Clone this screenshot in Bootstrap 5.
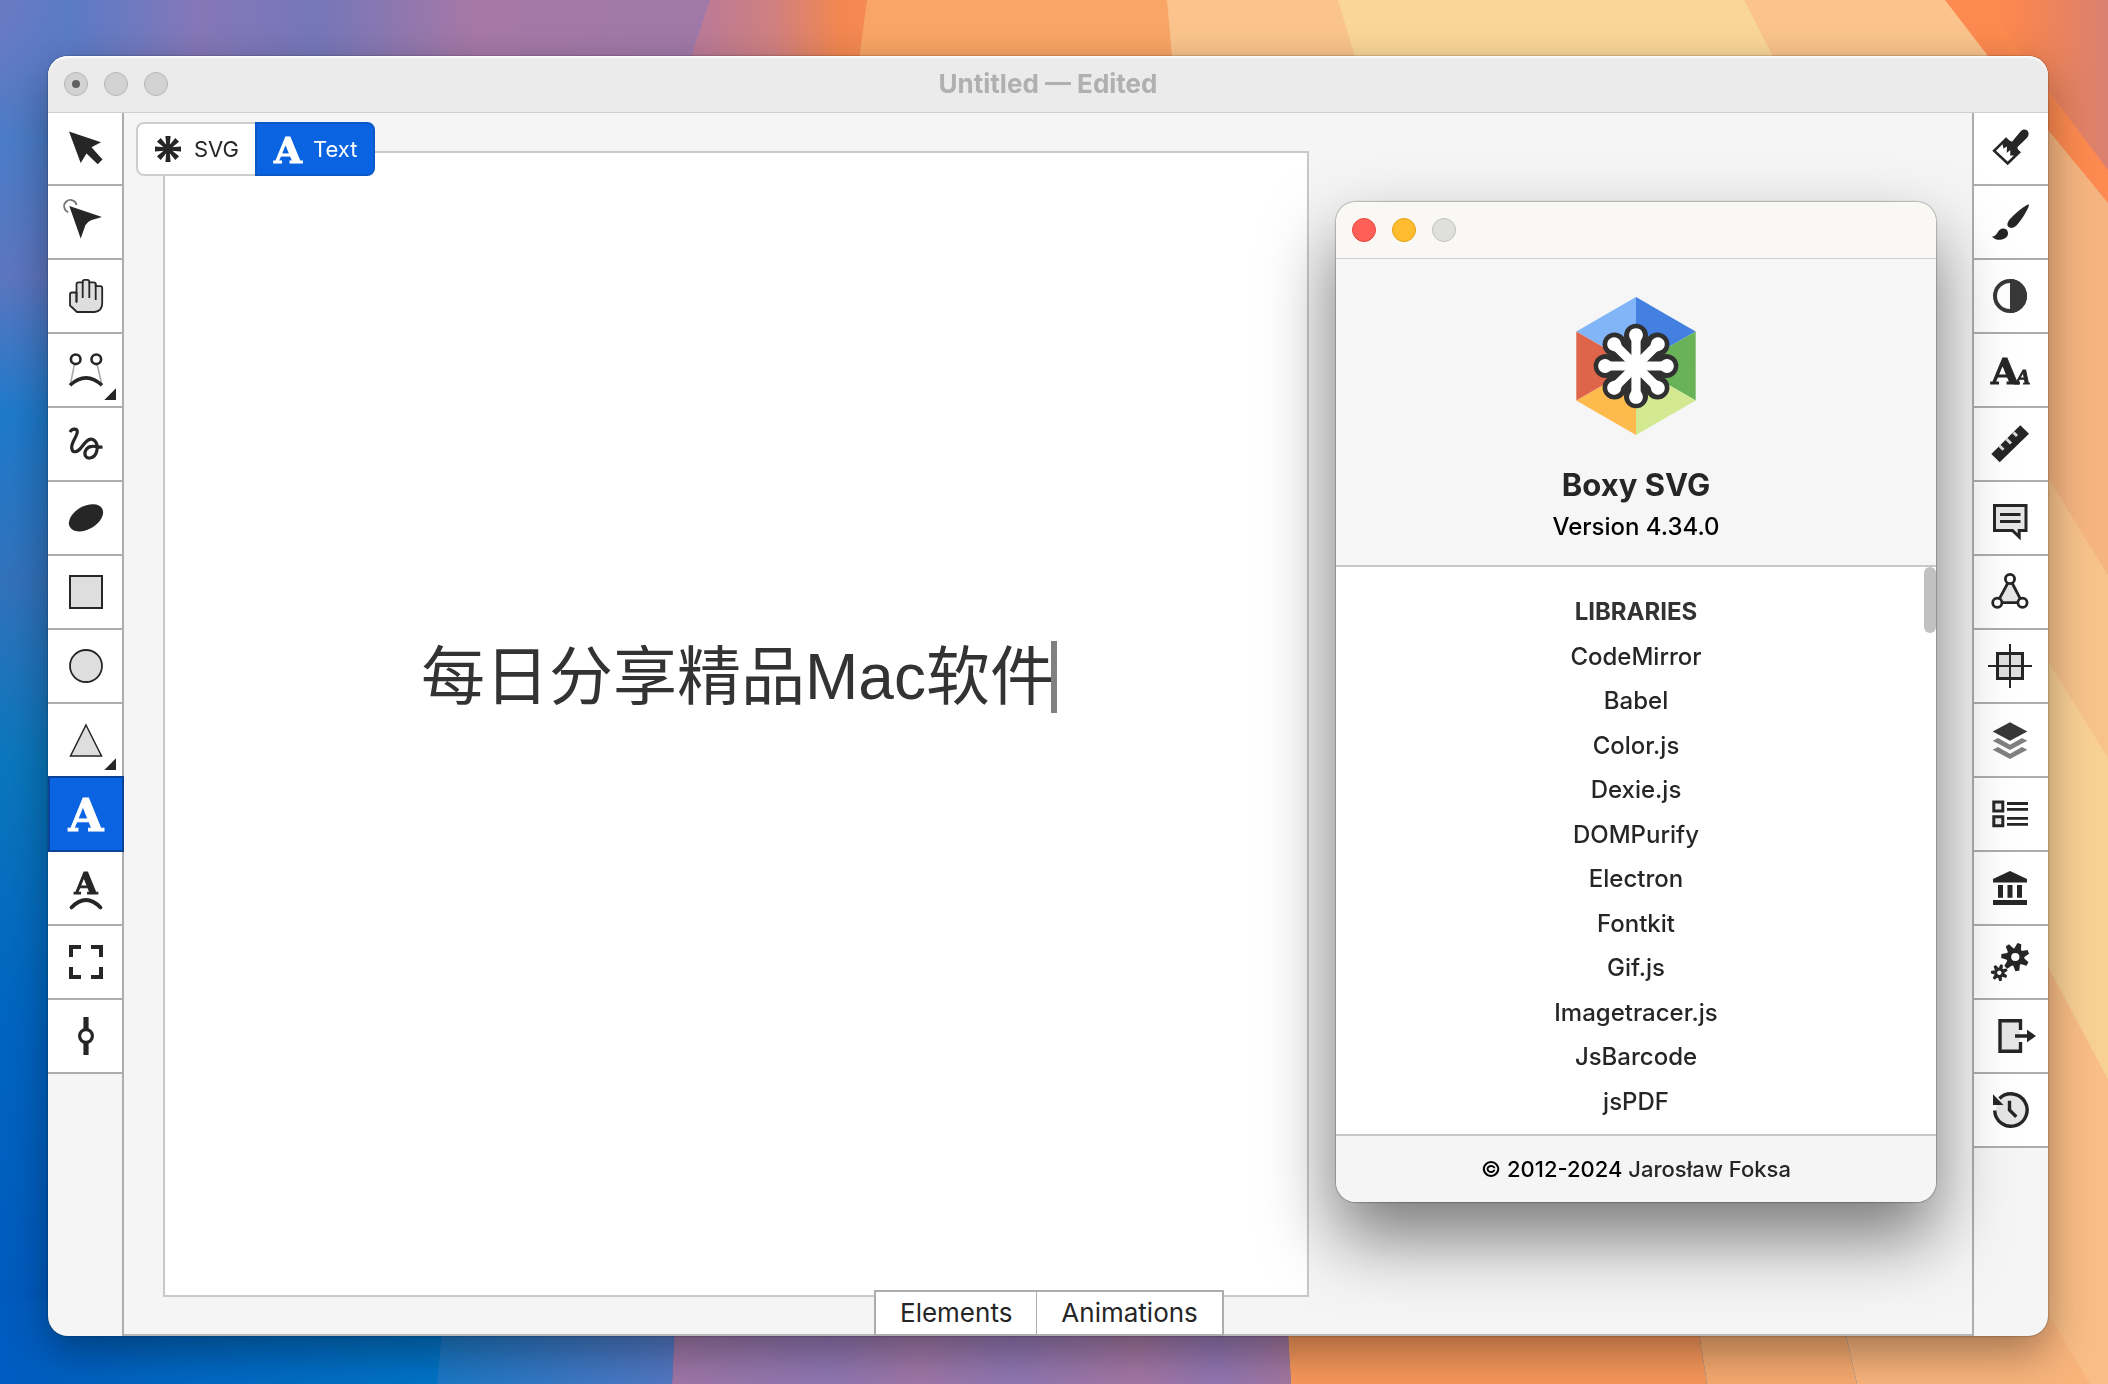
<!DOCTYPE html>
<html lang="en">
<head>
<meta charset="utf-8">
<meta name="viewport" content="width=device-width, initial-scale=1">
<title>Untitled — Edited</title>
<link href="https://cdn.jsdelivr.net/npm/bootstrap@5.3.0/dist/css/bootstrap.min.css" rel="stylesheet">
<style>
  :root { --ink: #262626; --line: #adadad; --accent: #0a64e2; }
  body { font-family: Inter, "Noto Sans CJK SC", sans-serif; color: var(--ink); background: #0067c2; padding: 56px 60px 48px 48px; }
  .wallpaper { z-index: -1; }
  .app-window { border-radius: 20px; background: #f5f5f5; box-shadow: 0 0 2px rgba(0,0,0,.5), 0 16px 44px rgba(0,0,0,.36); }
  .app-title { height: 56px; background: #ebebeb; border-radius: 20px 20px 0 0; padding: 0 16px; box-shadow: inset 0 2px 1px #fafafa, 0 1px 0 #cfcfcf; z-index: 1; }
  .app-title h1 { font-size: 26px; line-height: 32px; color: #b0b0b0; }
  .light { width: 24px; height: 24px; border-radius: 50%; border: 1px solid #b5b5b5; background: #d2d2d2; padding: 0; }
  .light-row { gap: 16px; }
  .dot { width: 8px; height: 8px; border-radius: 50%; background: #606060; }
  .light-red { background: #ff5f57; border-color: #e2463f; }
  .light-amber { background: #febc2e; border-color: #e1a116; }
  .light-off { background: #dfdfdb; border-color: #c2c2be; }

  .app-body { flex: 1 1 0; min-height: 0; }
  .tools { width: 76px; }
  .tools-left { border-right: 2px solid var(--line); border-radius: 0 0 0 20px; }
  .tools-right { border-left: 2px solid var(--line); }
  .tool { height: 74px; border: 0; border-bottom: 2px solid var(--line); background: #fff; padding: 0; color: var(--ink); }
  .tool svg { width: 74px; height: 72px; display: block; }
  .tool.active { background: var(--accent); color: #fff; width: 76px; height: 76px; margin-top: -2px; border: 2px solid #0a4396; z-index: 1; position: relative; }
  .tool.active svg { margin-left: -2px; }
  .slab { font-family: "DejaVu Serif", serif; font-weight: 700; fill: currentColor; stroke: currentColor; stroke-width: 1; text-anchor: middle; }
  .slab-alt { font-family: "Liberation Serif", serif; font-style: italic; }
  .tool svg, .crumb svg { fill: none; stroke: none; overflow: visible; }
  .f { fill: var(--ink); }
  .s { stroke: var(--ink); }
  .pale { fill: #dedede; }

  .canvas { padding: 39px 39px 37px; border-bottom: 2px solid #b9b9b9; }
  .artboard { aspect-ratio: 1; background: #fff; border: 2px solid #c8c8c8; }
  .art-text { font-family: "Liberation Sans", "Noto Sans CJK SC", sans-serif; font-size: 64px; line-height: 72px; color: #333; padding-left: 256px; padding-bottom: 94px; white-space: nowrap; }
  .caret { width: 6px; height: 72px; background: #808080; margin-left: -3px; }

  .crumbs { top: 10px; left: 12px; border: 2px solid #cdcdcd; border-radius: 8px; background: #fff; }
  .crumb { height: 50px; border: 0; background: none; font-size: 22px; line-height: 28px; color: var(--ink); padding: 0 18px 0 16px; gap: 12px; white-space: nowrap; }
  .crumb.active { background: var(--accent); color: #fff; margin: -2px; height: 54px; border: 2px solid #0a58c8; border-radius: 0 8px 8px 0; padding: 0 16px 0 14px; gap: 8px; }
  .panel-tabs { bottom: -2px; left: 750px; border: 2px solid var(--line); background: #fff; }
  .panel-tab { height: 42px; border: 0; background: none; font-size: 26px; line-height: 32px; color: var(--ink); padding: 0 24px; }
  .panel-tab + .panel-tab { border-left: 1px solid var(--line); }

  .about { top: 146px; right: 112px; width: 600px; height: 1000px; border-radius: 20px; background: #fff; box-shadow: 0 0 2px rgba(0,0,0,.75), 0 36px 70px rgba(0,0,0,.5); z-index: 3; overflow: hidden; }
  .about-bar { height: 57px; background: #faf8f4; border-bottom: 1px solid #cfcfcf; padding: 0 16px; }
  .about-head { background: #f6f6f6; border-bottom: 2px solid #c8c8c8; padding: 38px 0 22px; }
  .about-head h2 { font-size: 31px; line-height: 36px; margin: 32px 0 8px; font-weight: 700; }
  .version { font-size: 24px; line-height: 32px; font-weight: 500; color: #000; }
  .libs { padding: 23px 0 10px; font-size: 24px; line-height: 32px; font-weight: 500; }
  .libs h3 { font-size: 24px; line-height: 32px; font-weight: 700; color: #333; margin: 0; }
  .libs a, .about-foot a { color: var(--ink); text-decoration: none; }
  .about-foot { height: 68px; background: #f5f5f5; border-top: 2px solid #c8c8c8; font-size: 22px; line-height: 32px; font-weight: 500; color: #000; }
  .thumb { top: 0; right: 0; width: 12px; height: 66px; border-radius: 6px; background: #c1c1c1; }
</style>
<script src="https://cdn.jsdelivr.net/npm/bootstrap@5.3.0/dist/js/bootstrap.bundle.min.js"></script>
</head>
<body class="vh-100 overflow-hidden">

<svg class="wallpaper position-fixed top-0 start-0 w-100 h-100" viewBox="0 0 2108 1384" preserveAspectRatio="none" aria-hidden="true">
  <defs>
    <linearGradient id="gTop" gradientUnits="userSpaceOnUse" x1="0" x2="706" y1="0" y2="0">
      <stop offset="0" stop-color="#6b7ac2"/><stop offset=".1" stop-color="#5a7bc6"/><stop offset=".28" stop-color="#8577b8"/><stop offset=".45" stop-color="#7577b9"/><stop offset=".67" stop-color="#a678a6"/><stop offset="1" stop-color="#a079a8"/>
    </linearGradient>
    <linearGradient id="gRose"><stop offset="0" stop-color="#b5799c"/><stop offset=".5" stop-color="#d08080"/><stop offset=".85" stop-color="#f28750"/><stop offset="1" stop-color="#f58a54"/></linearGradient>
    <linearGradient id="gSide" x1="0" y1="0" x2="0" y2="1">
      <stop offset="0" stop-color="#5a7bc6" stop-opacity="0"/><stop offset=".1" stop-color="#4b7cc8"/><stop offset=".2" stop-color="#5d76c0"/><stop offset=".3" stop-color="#1e7acb"/><stop offset=".42" stop-color="#3372bc"/><stop offset=".55" stop-color="#0a77bd"/><stop offset=".75" stop-color="#0064c2"/><stop offset="1" stop-color="#0058bd"/>
    </linearGradient>
    <linearGradient id="gBlue"><stop offset="0" stop-color="#005bc0"/><stop offset=".4" stop-color="#0068c4"/><stop offset="1" stop-color="#0074c8"/></linearGradient>
    <linearGradient id="gTeal"><stop offset="0" stop-color="#1a78c6"/><stop offset="1" stop-color="#5578c4"/></linearGradient>
    <linearGradient id="gPurple"><stop offset="0" stop-color="#a077a8"/><stop offset=".25" stop-color="#9077b3"/><stop offset=".4" stop-color="#a077a8"/><stop offset=".55" stop-color="#9077b3"/><stop offset=".75" stop-color="#a577a4"/><stop offset=".88" stop-color="#9276b2"/><stop offset="1" stop-color="#a577a0"/></linearGradient>
    <linearGradient id="gCorner"><stop offset="0" stop-color="#fd8b50"/><stop offset=".3" stop-color="#f88650"/><stop offset="1" stop-color="#d98070"/></linearGradient>
  </defs>
  <path fill="url(#gTop)" d="M0 0H712L600 700H0Z"/>
  <path fill="url(#gSide)" d="M0 0H60V1384H0Z"/>
  <path fill="#fac48c" d="M900 0H2108V100H900Z"/>
  <path fill="url(#gRose)" d="M710 0H868L860 56V90H680Z"/>
  <path fill="#f9a565" d="M867 0H1167L1175 90H855Z"/>
  <path fill="#fad698" d="M1338 0H1744L1790 90H1365Z"/>
  <path fill="#f6b580" d="M2030 60H2108V1384H2030Z"/>
  <path fill="#f8c38b" d="M2040 465L2108 575V760L2040 648Z"/>
  <path fill="#f9d094" d="M2040 648L2108 758V1080L2040 952Z"/>
  <path fill="#f9bd86" d="M2040 952L2108 1080V1384H2040Z"/>
  <path fill="#fd8a50" d="M1945 0H2108V203L2040 120L1988 56Z"/>
  <path fill="url(#gCorner)" d="M1985 0H2108V170L2040 80Z"/>
  <path fill="url(#gBlue)" d="M0 1300H445L437 1384H0Z"/>
  <path fill="url(#gTeal)" d="M445 1300H676L672 1384H437Z"/>
  <path fill="url(#gPurple)" d="M676 1300H1286L1291 1384H672Z"/>
  <path fill="#f8985c" d="M1286 1300H1694L1707 1384H1291Z"/>
  <path fill="#f7ab70" d="M1694 1300H1838L1857 1384H1707Z"/>
  <path fill="#f9b47c" d="M1838 1300H2040L2090 1384H1857Z"/>
</svg>

<main class="app-window position-relative d-flex flex-column h-100">
  <header class="app-title position-relative d-flex align-items-center justify-content-center flex-shrink-0">
    <div class="light-row d-flex position-absolute start-0 ms-3">
      <button class="light d-flex align-items-center justify-content-center" aria-label="Close"><span class="dot"></span></button>
      <button class="light" aria-label="Minimize"></button>
      <button class="light" aria-label="Zoom"></button>
    </div>
    <h1 class="m-0 fw-bold">Untitled — Edited</h1>
  </header>

  <div class="app-body d-flex">
    <nav class="tools tools-left d-flex flex-column flex-shrink-0" aria-label="Tools">
      <button class="tool" aria-label="Transform"><svg viewBox="0 0 74 72"><path class="f" d="M21 19.5L53 30.3 43.5 35.3 54.5 47.5 49.7 52.3 38.5 41.5 32.7 51Z"/></svg></button>
      <button class="tool" aria-label="Edit"><svg viewBox="0 0 74 72"><path d="M20.3 26.2A6.3 6.3 0 1 1 28.6 19" stroke="#777" stroke-width="1.8"/><path class="f" d="M21.3 20L54 31 43 34.2Q39 36 37.5 39L32.7 52.5Z"/></svg></button>
      <button class="tool" aria-label="Pan"><svg viewBox="0 0 74 72"><path class="pale s" stroke-width="1.8" stroke-linejoin="round" d="M28.5 42V32.5H24Q22 32.5 22 34.5V45.5L29 52H46.5Q54.2 51 54.2 43.5V28Q54.2 26.2 52.2 26.2H47.7V24Q47.7 22.3 45.7 22.3H41.3V21.5Q41.3 19.8 39.3 19.8H36.7Q34.7 19.8 34.7 21.5V22.3H30.5Q28.5 22.3 28.5 24.3Z"/><path class="s" stroke-width="1.8" d="M28.5 32V42M34.7 22V38M41.3 22V38M47.7 24V40"/></svg></button>
      <button class="tool" aria-label="Cubic Bézier"><svg viewBox="0 0 74 72"><path stroke="#aaa" stroke-width="1.6" d="M26.3 31L22.3 51M49.3 31L53.7 50"/><circle class="s" cx="27.7" cy="25.3" r="4.8" stroke-width="2.6"/><circle class="s" cx="48.3" cy="25.3" r="4.8" stroke-width="2.6"/><path class="s" stroke-width="3.6" d="M22 51.3Q38 36.5 54 51.3"/><path class="f" d="M68 54.3V66H56.3Z"/></svg></button>
      <button class="tool" aria-label="Freehand"><svg viewBox="0 0 74 72"><path class="s" stroke-width="3.2" d="M22 24C24 20.5 29 20 29.3 23.5C29.6 28 23.2 34 23.7 40C24.2 45 28.5 44.5 31.5 41.5C35 38 39 30 44 31.2C48.5 32.5 50.5 38 48.5 44C46.5 50.5 39.5 51.5 37.5 48C35.5 43.5 39 38.5 44 38.3C48 38 50 39.5 54.5 39"/></svg></button>
      <button class="tool" aria-label="Blob"><svg viewBox="0 0 74 72"><ellipse class="f" cx="38" cy="35.8" rx="18.6" ry="11.5" transform="rotate(-30 38 35.8)"/></svg></button>
      <button class="tool" aria-label="Rectangle"><svg viewBox="0 0 74 72"><path class="pale s" stroke-width="2" d="M22 20H54V52H22Z"/></svg></button>
      <button class="tool" aria-label="Ellipse"><svg viewBox="0 0 74 72"><circle class="pale s" stroke-width="1.8" cx="38" cy="36" r="16"/></svg></button>
      <button class="tool" aria-label="Triangle"><svg viewBox="0 0 74 72"><path class="pale s" stroke-width="1.5" d="M38 21L53.5 52H22.5Z"/><path class="f" d="M68 54.3V66H56.3Z"/></svg></button>
      <button class="tool active" aria-label="Text"><svg viewBox="0 0 74 72"><text class="slab" x="38" y="53" font-size="45">A</text></svg></button>
      <button class="tool" aria-label="Text on path"><svg viewBox="0 0 74 72"><text class="slab" x="38" y="42" font-size="30">A</text><path class="s" stroke-width="3.8" stroke-linecap="round" d="M23.5 55.5Q38 40.5 52.5 55.5"/></svg></button>
      <button class="tool" aria-label="View"><svg viewBox="0 0 74 72"><path class="s" stroke-width="4" d="M33 21H23V31M43 21H53V31M33 51H23V41M43 51H53V41"/></svg></button>
      <button class="tool" aria-label="Gradient"><svg viewBox="0 0 74 72"><path class="s" stroke-width="5.2" d="M38 17V29M38 43V55"/><circle class="s" cx="38" cy="36" r="6.4" stroke-width="3.2"/></svg></button>
    </nav>

    <section class="canvas position-relative flex-grow-1 d-flex justify-content-start">
      <div class="artboard d-flex align-items-center">
        <div class="art-text d-flex"><span>每日分享精品Mac软件</span><span class="caret"></span></div>
      </div>
      <div class="crumbs d-flex position-absolute">
        <button class="crumb d-flex align-items-center"><svg width="28" height="28" viewBox="-14 -14 28 28"><g class="f"><path id="ray" d="M-2.6 -13H2.6L1.4 0H-1.4Z"/><use href="#ray" transform="rotate(45)"/><use href="#ray" transform="rotate(90)"/><use href="#ray" transform="rotate(135)"/><use href="#ray" transform="rotate(180)"/><use href="#ray" transform="rotate(225)"/><use href="#ray" transform="rotate(270)"/><use href="#ray" transform="rotate(315)"/><circle r="5"/></g></svg>SVG</button>
        <button class="crumb active d-flex align-items-center"><svg width="34" height="30" viewBox="0 0 34 30"><text class="slab" x="17" y="29" font-size="36">A</text></svg>Text</button>
      </div>
      <div class="panel-tabs d-flex position-absolute">
        <button class="panel-tab">Elements</button>
        <button class="panel-tab">Animations</button>
      </div>
    </section>

    <nav class="tools tools-right d-flex flex-column flex-shrink-0" aria-label="Panels">
      <button class="tool" aria-label="Fill"><svg viewBox="0 0 74 72"><path class="f" d="M18.3 38.7L32 25.3 35.5 28.5 38 29.8 46.5 19.5C52 14 58 21.5 52.3 26.5L43.3 35.3 44 37.5 47 40.3 33.7 53.3Z"/><path fill="#fff" d="M22 38.7L28.5 32.3 29.5 36.5 33 34.5 32.7 41 36.3 38 36.2 43.5 39.8 43.5 33.7 49.6Z"/></svg></button>
      <button class="tool" aria-label="Stroke"><svg viewBox="0 0 74 72"><path class="f" d="M54.3 18.3Q55.5 19 54.5 21C51.5 27.5 46.5 35.5 42.5 39.5C39.5 42.5 36 42.5 34.3 40.8C32.6 39 33.5 36 36 33C40.5 28 47 22.5 54.3 18.3Z"/><path class="f" d="M18 50.5C24 50.5 23 42.5 29.5 42.5C33 42.5 34.8 46 33.8 49C32.3 53.5 22.5 56.5 18 50.5Z"/></svg></button>
      <button class="tool" aria-label="Compositing"><svg viewBox="0 0 74 72"><circle cx="36" cy="36" r="15" stroke="#383838" stroke-width="4"/><path fill="#383838" d="M36 19A17 17 0 0 1 36 53Z"/></svg></button>
      <button class="tool" aria-label="Typography"><svg viewBox="0 0 74 72"><text class="slab" x="31" y="50" font-size="36">A</text><text class="slab slab-alt" x="49" y="50" font-size="22">A</text></svg></button>
      <button class="tool" aria-label="Geometry"><svg viewBox="0 0 74 72"><path class="f" d="M17.3 46L46.3 17.3 55 25.7 25.7 54.3Z"/><path stroke="#ddd" stroke-width="3" d="M25.5 37.8L29.5 41.8M32.5 31L37 35.5M39.5 24.5L43 28"/></svg></button>
      <button class="tool" aria-label="Meta"><svg viewBox="0 0 74 72"><path class="s" fill="#e6e6e6" stroke-width="3" d="M20.5 23.5H52V48.5H45.2V55L38.5 48.5H20.5Z"/><path class="s" stroke-width="3" d="M26 32.5H46.5M26 39.5H46.5"/></svg></button>
      <button class="tool" aria-label="Shape"><svg viewBox="0 0 74 72"><path class="s" fill="#e6e6e6" stroke-width="2.8" d="M36 23L48.3 46.7H23.3Z"/><g class="s" fill="#fff" stroke-width="2.8"><circle cx="36" cy="23" r="4.6"/><circle cx="23.3" cy="46.7" r="4.6"/><circle cx="48.5" cy="46.7" r="4.6"/></g></svg></button>
      <button class="tool" aria-label="Arrangement"><svg viewBox="0 0 74 72"><path class="pale s" stroke-width="3" d="M23.5 23.5H48.5V48.5H23.5Z"/><path class="s" stroke-width="2" d="M14 36H58M36 14V58"/></svg></button>
      <button class="tool" aria-label="Objects"><svg viewBox="0 0 74 72"><path fill="#383838" d="M18.7 27.5L36 18.3 53.3 27.5 36 36.7Z"/><path id="chev" fill="#808080" d="M18.7 36.7L24 34 36 40.7 48 34 53.3 36.7 36 46Z"/><use href="#chev" y="9"/></svg></button>
      <button class="tool" aria-label="Defs"><svg viewBox="0 0 74 72"><path class="s" fill="#eee" stroke-width="3" d="M19.8 24H28.8V33H19.8ZM19.8 38.7H28.8V47.7H19.8Z"/><path class="s" stroke-width="2.8" d="M33 25.5H54M33 31.3H54M33 40.3H54M33 46.3H54"/></svg></button>
      <button class="tool" aria-label="Library"><svg viewBox="0 0 74 72"><path class="f" d="M36 19L53 27V30.5H19V27ZM24 33H29V45.7H24ZM33.5 33H38.5V45.7H33.5ZM43 33H48V45.7H43ZM19 48H53V53H19Z"/></svg></button>
      <button class="tool" aria-label="Generators"><svg viewBox="0 0 74 72">
        <g transform="translate(41.3 31)"><circle class="s" r="6.6" stroke-width="5"/><path id="tooth" class="f" d="M-3.4 -8L-2 -14H2L3.4 -8Z" transform="rotate(17)"/><use href="#tooth" transform="rotate(51.4)"/><use href="#tooth" transform="rotate(102.9)"/><use href="#tooth" transform="rotate(154.3)"/><use href="#tooth" transform="rotate(205.7)"/><use href="#tooth" transform="rotate(257.1)"/><use href="#tooth" transform="rotate(308.6)"/></g>
        <g transform="translate(25.3 46.7) scale(.6)"><circle class="s" r="6.2" stroke-width="5"/><use href="#tooth"/><use href="#tooth" transform="rotate(51.4)"/><use href="#tooth" transform="rotate(102.9)"/><use href="#tooth" transform="rotate(154.3)"/><use href="#tooth" transform="rotate(205.7)"/><use href="#tooth" transform="rotate(257.1)"/><use href="#tooth" transform="rotate(308.6)"/></g></svg></button>
      <button class="tool" aria-label="Export"><svg viewBox="0 0 74 72"><path fill="#e6e6e6" d="M26 21H46V51H26Z"/><path class="s" stroke-width="3.4" d="M46.5 30V20.7H26V51.3H46.5V42M41 36H54"/><path class="f" d="M53 29.7L62 36 53 42.3Z"/></svg></button>
      <button class="tool" aria-label="History"><svg viewBox="0 0 74 72"><circle fill="#e6e6e6" cx="37" cy="36" r="15"/><path class="s" stroke-width="3.4" d="M20.7 36.5A16.2 16.2 0 1 0 25.5 24.5M35.5 26.7V36L42.3 42.7"/><path class="f" d="M19 20.3V31H29.5Z"/></svg></button>
    </nav>
  </div>

  <section class="about position-absolute d-flex flex-column text-center" aria-label="About">
    <div class="about-bar d-flex align-items-center light-row flex-shrink-0">
      <button class="light light-red" aria-label="Close"></button>
      <button class="light light-amber" aria-label="Minimize"></button>
      <button class="light light-off" aria-label="Zoom" disabled></button>
    </div>
    <div class="about-head">
      <svg class="d-block mx-auto" width="120" height="138" viewBox="-60 -69 120 138">
        <path fill="#81b5f8" d="M0 0L-59.7 -34.5 0 -69Z"/><path fill="#4380e0" d="M0 0V-69L59.7 -34.5Z"/>
        <path fill="#6ab257" d="M0 0L59.7 -34.5V34.5Z"/><path fill="#d2e992" d="M0 0L59.7 34.5 0 69Z"/>
        <path fill="#febb4d" d="M0 0V69L-59.7 34.5Z"/><path fill="#de6549" d="M0 0L-59.7 34.5V-34.5Z"/>
        <g fill="#303030"><circle r="28"/>
          <circle id="petal" cy="-30.3" r="12"/><use href="#petal" transform="rotate(45)"/><use href="#petal" transform="rotate(90)"/><use href="#petal" transform="rotate(135)"/><use href="#petal" transform="rotate(180)"/><use href="#petal" transform="rotate(225)"/><use href="#petal" transform="rotate(270)"/><use href="#petal" transform="rotate(315)"/></g>
        <g fill="#fff">
          <path id="arm" d="M-4.6 0V-24.5Q-4.8 -26 -6 -27.5A6.9 6.9 0 1 1 6 -27.5Q4.8 -26 4.6 -24.5V0Z"/><use href="#arm" transform="rotate(45)"/><use href="#arm" transform="rotate(90)"/><use href="#arm" transform="rotate(135)"/><use href="#arm" transform="rotate(180)"/><use href="#arm" transform="rotate(225)"/><use href="#arm" transform="rotate(270)"/><use href="#arm" transform="rotate(315)"/></g>
      </svg>
      <h2>Boxy SVG</h2>
      <div class="version">Version 4.34.0</div>
    </div>
    <div class="libs position-relative flex-grow-1 d-flex flex-column">
      <h3 class="flex-fill d-flex align-items-center justify-content-center">LIBRARIES</h3>
      <a class="flex-fill d-flex align-items-center justify-content-center" href="#">CodeMirror</a>
      <a class="flex-fill d-flex align-items-center justify-content-center" href="#">Babel</a>
      <a class="flex-fill d-flex align-items-center justify-content-center" href="#">Color.js</a>
      <a class="flex-fill d-flex align-items-center justify-content-center" href="#">Dexie.js</a>
      <a class="flex-fill d-flex align-items-center justify-content-center" href="#">DOMPurify</a>
      <a class="flex-fill d-flex align-items-center justify-content-center" href="#">Electron</a>
      <a class="flex-fill d-flex align-items-center justify-content-center" href="#">Fontkit</a>
      <a class="flex-fill d-flex align-items-center justify-content-center" href="#">Gif.js</a>
      <a class="flex-fill d-flex align-items-center justify-content-center" href="#">Imagetracer.js</a>
      <a class="flex-fill d-flex align-items-center justify-content-center" href="#">JsBarcode</a>
      <a class="flex-fill d-flex align-items-center justify-content-center" href="#">jsPDF</a>
      <span class="thumb position-absolute"></span>
    </div>
    <footer class="about-foot d-flex align-items-center justify-content-center flex-shrink-0"><span>© 2012-2024 <a href="#">Jarosław Foksa</a></span></footer>
  </section>
</main>
</body>
</html>
